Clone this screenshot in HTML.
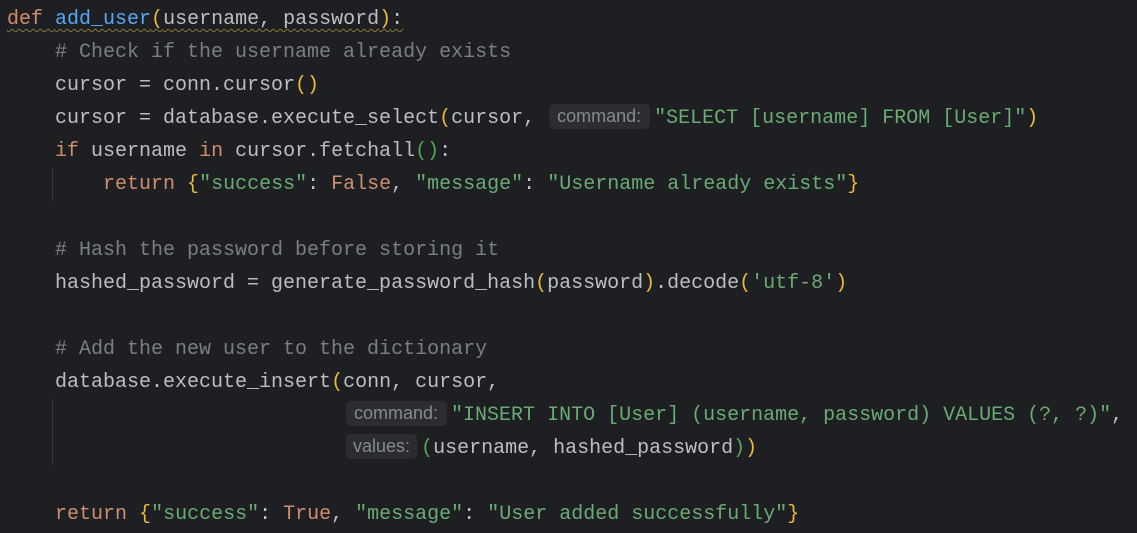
<!DOCTYPE html>
<html><head><meta charset="utf-8"><style>
html,body{margin:0;padding:0;background:#1e1f22;width:1137px;height:533px;overflow:hidden}
.l{position:absolute;left:7px;height:33px;line-height:33px;font-family:"Liberation Mono",monospace;font-size:20px;color:#bcbec4;white-space:pre}
.k{color:#cf8e6d}.f{color:#56a8f5}.s{color:#6aab73}.c{color:#7a7e85}.y{color:#e8ba36}.g{color:#54a857}
.h{display:inline-block;font-family:"Liberation Sans",sans-serif;font-size:18px;color:#868a91;background:#2b2d30;border-radius:5px;height:25px;line-height:25px;vertical-align:1px;padding:0 9px 0 8px;margin-right:4px}
.hv{padding:0 7px 0 7px}
.w{text-decoration:underline wavy #8a7a3a;text-decoration-thickness:1px;text-underline-offset:4px}
.gd{position:absolute;width:1px;background:#393b40}
</style></head><body>
<div class="gd" style="left:52px;top:168px;height:33px"></div>
<div class="gd" style="left:52px;top:399px;height:66px"></div>
<div class="l" style="top:3px"><span class="w"><span class="k">def</span> <span class="f">add_user</span><span class="y">(</span>username, password<span class="y">)</span>:</span></div>
<div class="l c" style="top:36px">    # Check if the username already exists</div>
<div class="l" style="top:69px">    cursor = conn.cursor<span class="y">()</span></div>
<div class="l" style="top:102px">    cursor = database.execute_select<span class="y">(</span>cursor, <span class="h" style="margin-left:2px">command:</span><span class="s">"SELECT [username] FROM [User]"</span><span class="y">)</span></div>
<div class="l" style="top:135px">    <span class="k">if</span> username <span class="k">in</span> cursor.fetchall<span class="g">()</span>:</div>
<div class="l" style="top:168px">        <span class="k">return</span> <span class="y">{</span><span class="s">"success"</span>: <span class="k">False</span>, <span class="s">"message"</span>: <span class="s">"Username already exists"</span><span class="y">}</span></div>
<div class="l c" style="top:234px">    # Hash the password before storing it</div>
<div class="l" style="top:267px">    hashed_password = generate_password_hash<span class="y">(</span>password<span class="y">)</span>.decode<span class="y">(</span><span class="s">'utf-8'</span><span class="y">)</span></div>
<div class="l c" style="top:333px">    # Add the new user to the dictionary</div>
<div class="l" style="top:366px">    database.execute_insert<span class="y">(</span>conn, cursor,</div>
<div class="l" style="top:399px;left:346px"><span class="h">command:</span><span class="s">"INSERT INTO [User] (username, password) VALUES (?, ?)"</span>,</div>
<div class="l" style="top:432px;left:346px"><span class="h hv">values:</span><span class="g">(</span>username, hashed_password<span class="g">)</span><span class="y">)</span></div>
<div class="l" style="top:498px">    <span class="k">return</span> <span class="y">{</span><span class="s">"success"</span>: <span class="k">True</span>, <span class="s">"message"</span>: <span class="s">"User added successfully"</span><span class="y">}</span></div>
</body></html>
